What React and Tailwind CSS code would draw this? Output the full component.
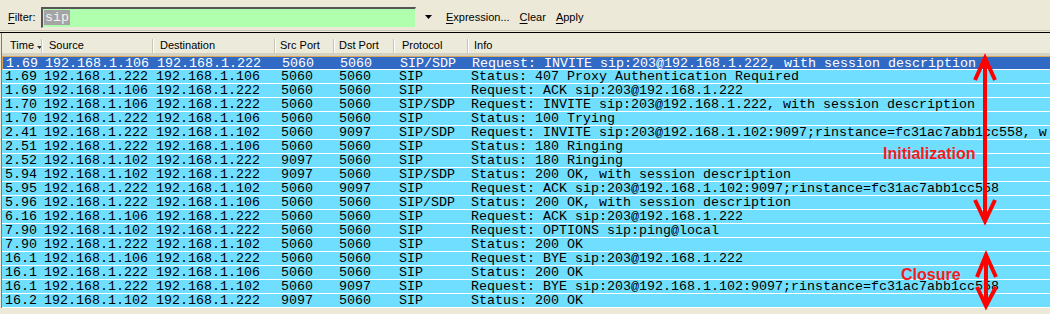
import React from 'react';

const A = '192.168.1.106';
const B = '192.168.1.222';
const C = '192.168.1.102';

const rows = [
  ['1.69', A, B, '5060', '5060', 'SIP/SDP', 'Request: INVITE sip:203@192.168.1.222, with session description'],
  ['1.69', B, A, '5060', '5060', 'SIP', 'Status: 407 Proxy Authentication Required'],
  ['1.69', A, B, '5060', '5060', 'SIP', 'Request: ACK sip:203@192.168.1.222'],
  ['1.70', A, B, '5060', '5060', 'SIP/SDP', 'Request: INVITE sip:203@192.168.1.222, with session description'],
  ['1.70', B, A, '5060', '5060', 'SIP', 'Status: 100 Trying'],
  ['2.41', B, C, '5060', '9097', 'SIP/SDP', 'Request: INVITE sip:203@192.168.1.102:9097;rinstance=fc31ac7abb1cc558, w'],
  ['2.51', B, A, '5060', '5060', 'SIP', 'Status: 180 Ringing'],
  ['2.52', C, B, '9097', '5060', 'SIP', 'Status: 180 Ringing'],
  ['5.94', C, B, '9097', '5060', 'SIP/SDP', 'Status: 200 OK, with session description'],
  ['5.95', B, C, '5060', '9097', 'SIP', 'Request: ACK sip:203@192.168.1.102:9097;rinstance=fc31ac7abb1cc558'],
  ['5.96', B, A, '5060', '5060', 'SIP/SDP', 'Status: 200 OK, with session description'],
  ['6.16', A, B, '5060', '5060', 'SIP', 'Request: ACK sip:203@192.168.1.222'],
  ['7.90', C, B, '5060', '5060', 'SIP', 'Request: OPTIONS sip:ping@local'],
  ['7.90', B, C, '5060', '5060', 'SIP', 'Status: 200 OK'],
  ['16.1', A, B, '5060', '5060', 'SIP', 'Request: BYE sip:203@192.168.1.222'],
  ['16.1', B, A, '5060', '5060', 'SIP', 'Status: 200 OK'],
  ['16.1', B, C, '5060', '9097', 'SIP', 'Request: BYE sip:203@192.168.1.102:9097;rinstance=fc31ac7abb1cc558'],
  ['16.2', C, B, '9097', '5060', 'SIP', 'Status: 200 OK'],
];

// cell widths + left padding, shared by header and rows
const cols = [
  { label: 'Time', w: 'w-[38px]', pl: 'pl-[3px]', hpl: 'pl-[5px]' },
  { label: 'Source', w: 'w-[111px]', pl: 'pl-[4px]', hpl: 'pl-[6px]' },
  { label: 'Destination', w: 'w-[122px]', pl: 'pl-[5px]', hpl: 'pl-[6px]' },
  { label: 'Src Port', w: 'w-[59px]', pl: 'pl-[8px]', hpl: 'pl-[4px]' },
  { label: 'Dst Port', w: 'w-[60px]', pl: 'pl-[7px]', hpl: 'pl-[4px]' },
  { label: 'Protocol', w: 'w-[74px]', pl: 'pl-[7px]', hpl: 'pl-[7px]' },
];

const ui = { fontFamily: '"Liberation Sans", Arial, sans-serif' };
const mono = { fontFamily: '"Liberation Mono", "Courier New", monospace' };

function Ul({ c, rest }) {
  return (
    <span>
      <span className="underline underline-offset-2">{c}</span>
      {rest}
    </span>
  );
}

function Toolbar() {
  return (
    <div className="h-[31px] pt-[4px] flex items-center bg-[#ECE9D8] border-b border-[#C9C6B6] text-[11px] text-black" style={ui}>
      <div className="pl-[8px] w-[41px]">
        <Ul c="F" rest="ilter:" />
      </div>
      <div className="w-[375px] h-[21px] bg-[#AFFFAF] border-t-2 border-l-2 border-t-[#555] border-l-[#555] border-b border-r border-b-[#ECE9D8] border-r-[#ECE9D8] flex items-center pl-[1px]">
        <span className="bg-[#A4A4A4] text-[#F4F4F4] text-[13.33px] leading-[15px] px-[1px]" style={mono}>sip</span>
      </div>
      <svg className="ml-[9px]" width="7" height="4" viewBox="0 0 7 4">
        <path d="M0 0h7L3.5 4z" fill="#000" />
      </svg>
      <div className="ml-[14px] flex gap-[10px]">
        <Ul c="E" rest="xpression..." />
        <Ul c="C" rest="lear" />
        <Ul c="A" rest="pply" />
      </div>
    </div>
  );
}

function Header() {
  return (
    <div className="flex h-[23px] pt-[5px] bg-[#EBEADB] border-b-[3px] border-[#D6D2C2] text-[11px] text-black" style={ui}>
      <div className="w-[3px]" />
      {cols.map((c, i) => (
        <div key={c.label} className={`${c.w} ${c.hpl} flex items-center relative`}>
          <span>{c.label}</span>
          {i === 0 && (
            <svg className="ml-[3px] mt-[3px]" width="5" height="3" viewBox="0 0 5 3">
              <path d="M0 0h5L2.5 3z" fill="#333" />
            </svg>
          )}
          <div className="absolute right-0 top-[1px] bottom-[0px] w-[2px] border-l border-[#C7C5B2] bg-white" />
        </div>
      ))}
      <div className="flex-1 flex items-center pl-[5px]">Info</div>
    </div>
  );
}

function Row({ r, sel }) {
  return (
    <div
      className={`flex h-[14px] border-b border-white text-[13.33px] leading-[14px] whitespace-nowrap ${
        sel ? 'bg-[#316AC5] text-white border-t border-t-[#D9A557] border-l border-l-[#D9A557]' : 'bg-[#70DFFF] text-black'
      }`}
      style={mono}
    >
      {cols.map((c, i) => (
        <div key={i} className={`${c.w} ${c.pl} shrink-0`}>
          {r[i]}
        </div>
      ))}
      <div className="flex-1 pl-[5px]">{r[6]}</div>
    </div>
  );
}

function Annotations() {
  return (
    <div className="absolute inset-0 pointer-events-none">
      <svg className="absolute left-0 top-0" width="1050" height="314" viewBox="0 0 1050 314">
        <g stroke="#FF0000" strokeWidth="4" fill="none" strokeLinecap="butt" strokeLinejoin="miter">
          <path d="M985 60V220" />
          <path d="M975 80L985 58L995 80" />
          <path d="M975 200L985 221L995 200" />
          <path d="M986 256V305" />
          <path d="M977 277L986 255L996 277" />
          <path d="M977 287L986 306L996 287" />
        </g>
      </svg>
      <div className="absolute left-[883px] top-[142px] text-[16px] font-bold text-[#F51B1B]" style={ui}>
        Initialization
      </div>
      <div className="absolute left-[901px] top-[263px] text-[16px] font-bold text-[#F51B1B]" style={ui}>
        Closure
      </div>
    </div>
  );
}

export default function App() {
  return (
    <div className="w-[1050px] h-[314px] overflow-hidden bg-[#ECE9D8] relative">
      <Toolbar />
      <div className="h-[2px] bg-[#ECE9D8] border-b border-black" />
      <div className="pl-[2px]">
        <div className="border-l border-[#7A7A7A] -ml-[1px]">
          <Header />
          <div>
            {rows.map((r, i) => (
              <Row key={i} r={r} sel={i === 0} />
            ))}
          </div>
        </div>
      </div>
      <Annotations />
    </div>
  );
}
